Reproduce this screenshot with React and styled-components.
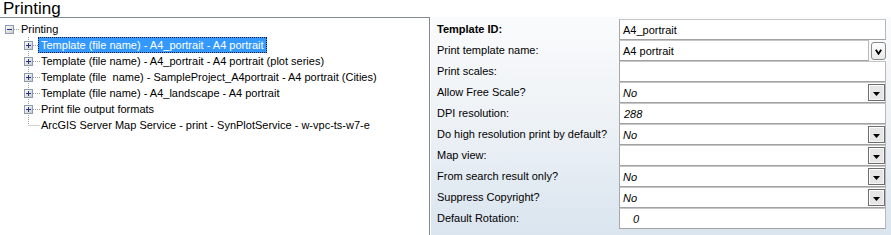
import React from 'react';
import styled, { createGlobalStyle, css } from 'styled-components';

const Global = createGlobalStyle`
  html, body { margin: 0; padding: 0; background: #fff; }
  body {
    font-family: "Liberation Sans", Arial, sans-serif;
    font-size: 11px;
    color: #000;
  }
`;

const Page = styled.div`
  width: 891px;
  height: 235px;
  overflow: hidden;
  display: flex;
  flex-direction: column;
`;

const Title = styled.div`
  height: 17px;
  font-size: 17px;
  line-height: 17px;
  padding-left: 3px;
  flex: none;
`;

const Body = styled.div`
  flex: 1;
  display: flex;
  min-height: 0;
`;

const TreePane = styled.div`
  width: 430px;
  flex: none;
  box-sizing: border-box;
  border-top: 1px solid #828790;
  border-right: 1px solid #828790;
  padding-top: 3px;
`;

const TreeRow = styled.div`
  display: flex;
  align-items: center;
  height: 16px;
  white-space: pre;
`;

const Indent = styled.div`
  width: 20px;
  height: 16px;
  flex: none;
`;

const TreeLabel = styled.span`
  margin-left: -2px;
  padding: 0 2px;
  height: 14px;
  line-height: 14px;
  border: 1px solid transparent;
  ${(p) =>
    p.$selected &&
    css`
      background: #3399ff;
      color: #fff;
      border: 1px dotted #0b1a33;
    `}
`;

const PropPane = styled.div`
  flex: 1;
  margin-left: 1px;
  padding: 2px 5px 0 0;
  background: linear-gradient(180deg, #fafbfc 0%, #eef2f6 45%, #dae5ef 100%);
`;

const PropRow = styled.div`
  display: grid;
  grid-template-columns: 188px 1fr;
  height: 21px;
`;

const PropLabel = styled.div`
  padding-left: 6px;
  line-height: 21px;
  font-weight: ${(p) => (p.$bold ? 'bold' : 'normal')};
  white-space: nowrap;
`;

const ValueWrap = styled.div`
  display: flex;
  gap: 2px;
  min-width: 0;
`;

const ValueBox = styled.div`
  flex: 1;
  box-sizing: border-box;
  height: 21px;
  display: flex;
  align-items: center;
  background: #fff;
  border: 1px solid;
  border-color: #c6c6c6 #b8b8b8 #a2a2a2 #a8a8a8;
  padding-left: ${(p) => p.$indent || 3}px;
  font-style: ${(p) => (p.$italic ? 'italic' : 'normal')};
`;

const ValueText = styled.span`
  flex: 1;
  white-space: nowrap;
`;

const DropButton = styled.div`
  width: 17px;
  height: 17px;
  box-sizing: border-box;
  flex: none;
  border: 1px solid #6d6d6d;
  box-shadow: inset 1px 1px #ffffff, inset -1px -1px #f4f4f4;
  background: #e6e6e6;
  display: flex;
  align-items: center;
  justify-content: center;
  margin-right: 0;
`;

const RoundButton = styled.div`
  width: 15px;
  height: 18px;
  box-sizing: border-box;
  flex: none;
  margin-top: 2px;
  border: 1px solid #8a8a8a;
  border-radius: 3px;
  background: linear-gradient(180deg, #fdfdfd 0%, #e9e9e9 100%);
  display: flex;
  align-items: center;
  justify-content: center;
`;

const Expander = ({ level, sign, last, root }) => {
  const bx = root ? 5 : 4;
  const cx = bx + 4.5;
  return (
    <svg width="20" height="16" viewBox="0 0 20 16" style={{ flex: 'none', display: 'block' }}>
      {!root && (
        <line
          x1={cx}
          y1="0"
          x2={cx}
          y2={last ? 8 : 16}
          stroke="#a0a0a0"
          strokeDasharray="1 1"
        />
      )}
      <line x1={sign ? bx + 9 : cx} y1="8.5" x2="20" y2="8.5" stroke="#a0a0a0" strokeDasharray="1 1" />
      {sign && (
        <g>
          <defs>
            <linearGradient id={`g${level}`} x1="0" y1="0" x2="1" y2="1">
              <stop offset="0" stopColor="#ffffff" />
              <stop offset="1" stopColor="#c9c9c3" />
            </linearGradient>
          </defs>
          <rect x={bx + 0.5} y="4.5" width="8" height="8" fill={`url(#g${level})`} stroke="#8d9ab3" />
          <line x1={bx + 2} y1="8.5" x2={bx + 7} y2="8.5" stroke="#23328a" />
          {sign === '+' && <line x1={cx} y1="6" x2={cx} y2="11" stroke="#23328a" />}
        </g>
      )}
    </svg>
  );
};

const Triangle = () => (
  <svg width="7" height="4" viewBox="0 0 7 4" style={{ display: 'block', marginTop: 2 }}>
    <polygon points="0,0 7,0 3.5,4" fill="#000" />
  </svg>
);

const Chevron = () => (
  <svg width="7" height="6" viewBox="0 0 7 6" style={{ display: 'block', marginTop: 2 }}>
    <polyline points="0.8,0.8 3.5,4.8 6.2,0.8" fill="none" stroke="#000" strokeWidth="1.8" />
  </svg>
);

const treeItems = [
  { text: 'Template (file name) - A4_portrait - A4 portrait', sign: '+', selected: true },
  { text: 'Template (file name) - A4_portrait - A4 portrait (plot series)', sign: '+' },
  { text: 'Template (file  name) - SampleProject_A4portrait - A4 portrait (Cities)', sign: '+' },
  { text: 'Template (file name) - A4_landscape - A4 portrait', sign: '+' },
  { text: 'Print file output formats', sign: '+' },
  { text: 'ArcGIS Server Map Service - print - SynPlotService - w-vpc-ts-w7-e', sign: null, last: true },
];

const props = [
  { label: 'Template ID:', value: 'A4_portrait', bold: true },
  { label: 'Print template name:', value: 'A4 portrait', kind: 'combo' },
  { label: 'Print scales:', value: '' },
  { label: 'Allow Free Scale?', value: 'No', italic: true, kind: 'drop' },
  { label: 'DPI resolution:', value: '288', italic: true, indent: 4 },
  { label: 'Do high resolution print by default?', value: 'No', italic: true, kind: 'drop' },
  { label: 'Map view:', value: '', kind: 'drop' },
  { label: 'From search result only?', value: 'No', italic: true, kind: 'drop' },
  { label: 'Suppress Copyright?', value: 'No', italic: true, kind: 'drop' },
  { label: 'Default Rotation:', value: '0', italic: true, indent: 13 },
];

export default function App() {
  return (
    <Page>
      <Global />
      <Title>Printing</Title>
      <Body>
        <TreePane>
          <TreeRow>
            <Expander level={0} sign="-" root />
            <TreeLabel>Printing</TreeLabel>
          </TreeRow>
          {treeItems.map((it, i) => (
            <TreeRow key={i}>
              <Indent />
              <Expander level={i + 1} sign={it.sign} last={it.last} />
              <TreeLabel $selected={it.selected}>{it.text}</TreeLabel>
            </TreeRow>
          ))}
        </TreePane>
        <PropPane>
          {props.map((p, i) => (
            <PropRow key={i}>
              <PropLabel $bold={p.bold}>{p.label}</PropLabel>
              <ValueWrap>
                <ValueBox $italic={p.italic} $indent={p.indent}>
                  <ValueText>{p.value}</ValueText>
                  {p.kind === 'drop' && (
                    <DropButton>
                      <Triangle />
                    </DropButton>
                  )}
                </ValueBox>
                {p.kind === 'combo' && (
                  <RoundButton>
                    <Chevron />
                  </RoundButton>
                )}
              </ValueWrap>
            </PropRow>
          ))}
        </PropPane>
      </Body>
    </Page>
  );
}
